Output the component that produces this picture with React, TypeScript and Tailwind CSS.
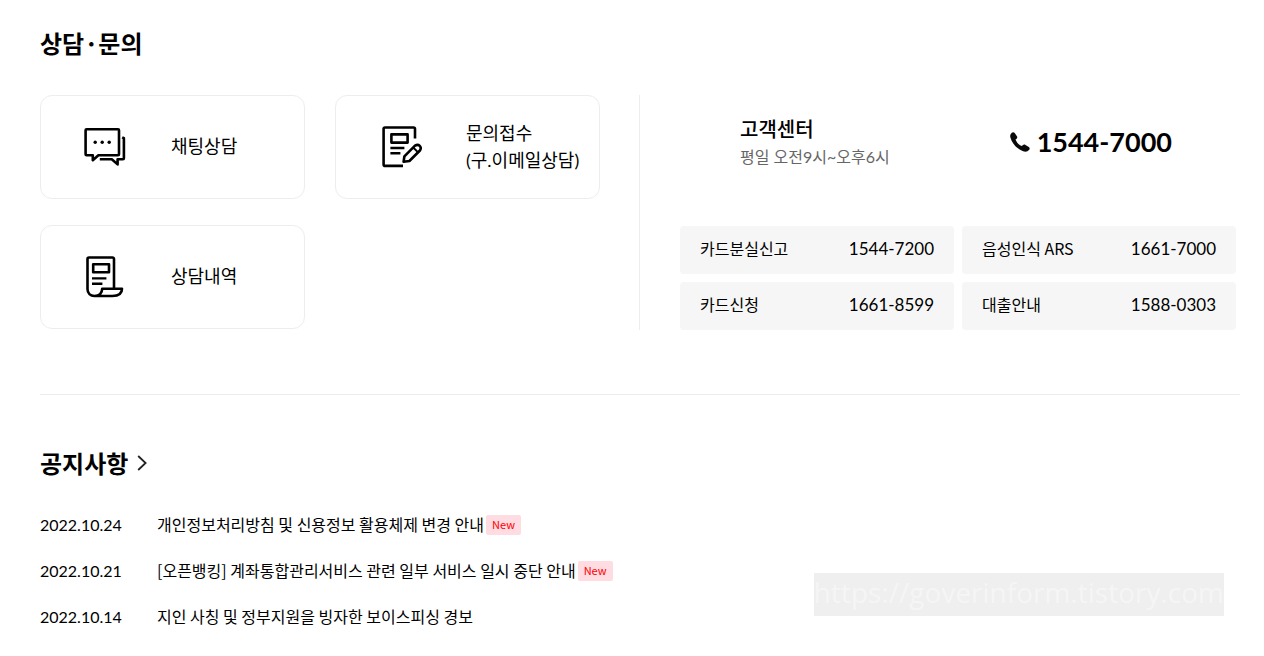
import type { ReactNode } from 'react';

function ChatIcon() {
  return (
    <svg viewBox="0 0 44 44" className="size-11 shrink-0" fill="none" stroke="#000" strokeWidth="2.6" strokeLinejoin="round" aria-hidden="true">
      <path d="M3.6 4.3H35a1 1 0 0 1 1 1V29.2a1 1 0 0 1-1 1H15.4L9.8 35.2V30.2H3.6a1 1 0 0 1-1-1V5.3a1 1 0 0 1 1-1Z" />
      <path d="M39.2 12.3l1.7.9V33.2a1 1 0 0 1-1 1H34.6v5.2L28.8 34.2H16.8" />
      <g fill="#000" stroke="none">
        <circle cx="12.2" cy="17.3" r="1.7" />
        <circle cx="19.2" cy="17.3" r="1.7" />
        <circle cx="26.2" cy="17.3" r="1.7" />
      </g>
    </svg>
  );
}

function InquiryIcon() {
  return (
    <svg viewBox="0 0 44 44" className="size-11 shrink-0" fill="none" stroke="#000" strokeWidth="2.6" strokeLinejoin="round" aria-hidden="true">
      <path d="M37 13.4V4a1.5 1.5 0 0 0-1.5-1.5H7.1A1.5 1.5 0 0 0 5.6 4v35.4a1.5 1.5 0 0 0 1.5 1.5H25" />
      <path d="M13.4 9.4H29.6V17.6H13.4Z" />
      <path d="M12.4 23H26.4M12.4 28.3H22.4" strokeWidth="2.4" />
      <path d="M25.6 36.8l.8-5.5L37 20.7c3.8-2.2 7.2 1.2 4.9 4.8L31.4 36Z" />
      <path d="M35.2 22.5l4.9 4.9" strokeWidth="2" />
    </svg>
  );
}

function HistoryIcon() {
  return (
    <svg viewBox="0 0 44 44" className="size-11 shrink-0" fill="none" stroke="#000" strokeWidth="2.6" strokeLinejoin="round" aria-hidden="true">
      <path d="M31 33.4V4a1.5 1.5 0 0 0-1.5-1.5H6A1.5 1.5 0 0 0 4.5 4V34c0 4.5 2.8 7 7 7H29.4c5.8 0 9.6-2.4 9.6-7.2H19.2c-.2 4.4-2.6 7.2-7.7 7.2" />
      <path d="M10.2 9.2H26V17.2H10.2Z" />
      <path d="M9 23.4H23.4M9 28.7H19.4" strokeWidth="2.4" />
    </svg>
  );
}

function PhoneIcon() {
  return (
    <svg viewBox="0 0 20 20" className="size-5 shrink-0" fill="#0a0a0a" aria-hidden="true">
      <path d="M1.6.9C2.7.1 3.9.1 4.7 1.1L6.9 4.2C7.6 5.2 7.3 6.2 6.4 6.9L5.5 7.6C6.5 10.2 9 12.9 11.8 14.1L12.7 13.2C13.6 12.4 14.5 12.3 15.5 12.9L18.8 15C19.8 15.7 20 16.8 19.2 17.8C17.7 19.7 15.6 20.2 13.1 19.3C6.9 17 2.2 11.9.4 5.6C-.1 3.6.3 2 1.6.9Z" />
    </svg>
  );
}

function ServiceCard({ icon, children }: { icon: ReactNode; children: ReactNode }) {
  return (
    <a
      href="#"
      className="flex h-[104px] items-center gap-11 rounded-xl border border-[#ededed] pl-[42px] font-['Lato','Noto_Sans_CJK_KR',sans-serif] text-lg leading-[27px]"
    >
      {icon}
      <span className="pb-px">{children}</span>
    </a>
  );
}

const numbers = [
  { name: '카드분실신고', tel: '1544-7200' },
  { name: '음성인식 ARS', tel: '1661-7000' },
  { name: '카드신청', tel: '1661-8599' },
  { name: '대출안내', tel: '1588-0303' },
];

const notices = [
  { date: '2022.10.24', title: '개인정보처리방침 및 신용정보 활용체제 변경 안내', isNew: true },
  { date: '2022.10.21', title: '[오픈뱅킹] 계좌통합관리서비스 관련 일부 서비스 일시 중단 안내', isNew: true },
  { date: '2022.10.14', title: '지인 사칭 및 정부지원을 빙자한 보이스피싱 경보', isNew: false },
];

export default function App() {
  return (
    <div className="relative min-h-screen bg-white pt-[25px] pr-6 pl-10 font-['Noto_Sans_CJK_KR',sans-serif] text-base text-black">
      <section className="border-b border-[#ededed] pb-16">
        <h2 className="text-2xl leading-9 font-bold">상담·문의</h2>
        <div className="mt-[34px] grid grid-cols-2">
          <div className="grid grid-cols-2 content-start gap-x-[30px] gap-y-[26px] border-r border-[#ededed] pr-[39px]">
            <ServiceCard icon={<ChatIcon />}>채팅상담</ServiceCard>
            <ServiceCard icon={<InquiryIcon />}>
              문의접수
              <br />
              (구.이메일상담)
            </ServiceCard>
            <ServiceCard icon={<HistoryIcon />}>상담내역</ServiceCard>
          </div>
          <div className="flex flex-col pr-1 pl-10">
            <div className="flex items-center justify-between pt-5 pr-16 pl-[60px]">
              <div>
                <h3 className="text-xl leading-7 font-medium">고객센터</h3>
                <p className="font-['Lato','Noto_Sans_CJK_KR',sans-serif] leading-7 text-[#666]">
                  평일 오전9시~오후6시
                </p>
              </div>
              <a
                href="tel:1544-7000"
                className="flex items-center gap-[7px] pb-0.5 font-['Lato',sans-serif] text-[27px] leading-9 font-bold"
              >
                <PhoneIcon />
                1544-7000
              </a>
            </div>
            <dl className="mt-[55px] grid grid-cols-2 gap-2">
              {numbers.map((n) => (
                <div key={n.name} className="flex h-12 items-center justify-between rounded bg-[#f6f6f6] px-5 pb-0.5">
                  <dt className="pb-0.5">{n.name}</dt>
                  <dd className="font-['Lato',sans-serif] text-[17px]">{n.tel}</dd>
                </div>
              ))}
            </dl>
          </div>
        </div>
      </section>

      <section className="pt-[50px]">
        <h2 className="text-2xl leading-9 font-bold">
          <a href="#" className="inline-flex items-center gap-[9px]">
            공지사항
            <svg viewBox="0 0 10 16" className="h-4 w-2.5" fill="none" stroke="#222" strokeWidth="1.8" aria-hidden="true">
              <path d="M1.2 1L8.6 8L1.2 15" />
            </svg>
          </a>
        </h2>
        <ul className="mt-[21px]">
          {notices.map((n) => (
            <li key={n.date} className="flex h-[46px] items-center">
              <time className="w-[117px] shrink-0 font-['Lato',sans-serif]">{n.date}</time>
              <a href="#" className="pb-0.5">
                {n.title}
              </a>
              {n.isNew && (
                <span className="ml-0.5 rounded-xs bg-[#ffdbe2] px-1.5 pb-0.5 text-[11px] leading-[18px] text-[#f00]">
                  New
                </span>
              )}
            </li>
          ))}
        </ul>
      </section>

      <div className="absolute right-10 bottom-10 bg-[#efefef] pb-1 font-['Open_Sans',sans-serif] text-[28px] leading-[39px] text-[#f5f5f5]">
        https://goverinform.tistory.com
      </div>
    </div>
  );
}
